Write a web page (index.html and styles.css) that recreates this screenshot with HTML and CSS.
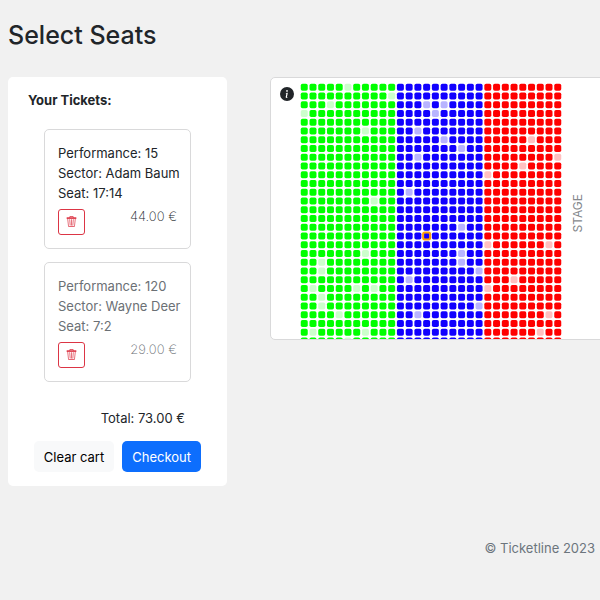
FILE: index.html
```html
<!DOCTYPE html>
<html lang="en">
<head>
<meta charset="utf-8">
<meta name="viewport" content="width=device-width, initial-scale=1">
<title>Select Seats</title>
<link rel="stylesheet" href="styles.css">
</head>
<body>
<svg class="sprite" aria-hidden="true">
  <symbol id="trash" viewBox="0 0 16 16">
    <path d="M6.5 1h3a.5.5 0 0 1 .5.5v1H6v-1a.5.5 0 0 1 .5-.5M11 2.5v-1A1.5 1.5 0 0 0 9.5 0h-3A1.5 1.5 0 0 0 5 1.500v1H1.500a.5.5 0 0 0 0 1h.538l.853 10.660A2 2 0 0 0 4.885 16h6.230a2 2 0 0 0 1.994-1.840l.853-10.660h.538a.5.5 0 0 0 0-1zm1.958 1-.846 10.580a1 1 0 0 1-.997.920h-6.230a1 1 0 0 1-.997-.920L3.042 3.500zm-7.487 1a.5.5 0 0 1 .528.470l.5 8.500a.5.5 0 0 1-.998.060L5 5.030a.5.5 0 0 1 .471-.530m5.058 0a.5.5 0 0 1 .470.530l-.5 8.500a.5.5 0 1 1-.998-.060l.5-8.500a.5.5 0 0 1 .528-.470M8 4.500a.5.5 0 0 1 .5.5v8.500a.5.5 0 0 1-1 0V5a.5.5 0 0 1 .5-.5"/>
    <path d="M1 2h14v2H1z"/>
  </symbol>
</svg>
<main class="page">
  <h1>Select Seats</h1>
  <div class="layout">
    <section class="cart">
      <h2>Your Tickets:</h2>
      <ul class="tickets">
        <li class="ticket">
          <p>Performance: 15</p>
          <p>Sector: Adam Baum</p>
          <p>Seat: 17:14</p>
          <div class="ticket-foot">
            <button class="remove" type="button" aria-label="Remove ticket"><svg><use href="#trash"/></svg></button>
            <span class="price">44.00 €</span>
          </div>
        </li>
        <li class="ticket reserved">
          <p>Performance: 120</p>
          <p>Sector: Wayne Deer</p>
          <p>Seat: 7:2</p>
          <div class="ticket-foot">
            <button class="remove" type="button" aria-label="Remove ticket"><svg><use href="#trash"/></svg></button>
            <span class="price">29.00 €</span>
          </div>
        </li>
      </ul>
      <p class="total">Total: 73.00 €</p>
      <div class="actions">
        <button class="btn light" type="button">Clear cart</button>
        <button class="btn primary" type="button">Checkout</button>
      </div>
    </section>
    <section class="hall">
      <button class="info" type="button" aria-label="Legend">
        <svg viewBox="0 0 16 16"><path d="M8 16A8 8 0 1 0 8 0a8 8 0 0 0 0 16m.93-9.412-1 4.705c-.07.34.029.533.304.533.194 0 .487-.07.686-.246l-.088.416c-.287.346-.92.598-1.465.598-.703 0-1.002-.422-.808-1.319l.738-3.468c.064-.293.006-.399-.287-.470l-.451-.081.082-.381 2.290-.287zM8 5.500a1 1 0 1 1 0-2 1 1 0 0 1 0 2"/></svg>
      </button>
      <svg class="seats" id="seats" viewBox="0 0 900 882" preserveAspectRatio="xMidYMin slice"></svg>
      <span class="stage">STAGE</span>
    </section>
  </div>
  <footer>© Ticketline 2023</footer>
</main>
<script src="seats.js"></script>
</body>
</html>
```
FILE: styles.css
```css
* { box-sizing: border-box; }
body {
  margin: 0;
  background: #f1f1f1;
  color: #212529;
  font: 13px/20px Inter, "Liberation Sans", sans-serif;
  overflow-x: hidden;
}
h1, h2, p, ul { margin: 0; padding: 0; }
button { font: inherit; cursor: pointer; }
.sprite { display: none; }
.page { padding: 20px 5px 0 8px; }
h1 { font-size: 25px; line-height: 30px; font-weight: 500; }
.layout {
  display: grid;
  grid-template-columns: 219px minmax(340px, 1fr);
  gap: 43px;
  align-items: start;
  margin-top: 27px;
}
.cart {
  background: #fff;
  border-radius: 5px;
  padding: 13px 20px 14px;
}
h2 { font-size: 13px; line-height: 20px; font-weight: 700; }
.tickets {
  list-style: none;
  display: grid;
  grid-template-columns: minmax(0, 1fr);
  gap: 13px;
  margin: 19px 16px 0;
}
.ticket {
  border: 1px solid #d9d9da;
  border-radius: 5px;
  padding: 13px;
  white-space: nowrap;
}
.reserved { color: #6b7075; }
.ticket-foot {
  display: flex;
  justify-content: space-between;
  align-items: flex-start;
  margin-top: 6px;
}
.remove {
  display: grid;
  place-items: center;
  width: 27px;
  height: 26px;
  padding: 0 0 2px;
  border: 1px solid #dc3545;
  border-radius: 3px;
  background: #fff;
  color: #dc3545;
}
.remove svg { width: 11px; height: 11px; fill: currentColor; }
.price { font-weight: 200; line-height: 14px; }
.total { margin: 26px 22px 0 0; text-align: right; }
.actions {
  display: flex;
  justify-content: flex-end;
  gap: 8px;
  margin: 13px 6px 0 0;
}
.btn {
  height: 31px;
  padding: 0 10px;
  border: 0;
  border-radius: 5px;
  white-space: nowrap;
}
.light { background: #f8f9fa; color: #000; }
.primary { background: #0d6efd; color: #fff; }
.hall {
  display: flex;
  height: 263px;
  padding: 5px 9px 0;
  border: 1px solid #d9d9da;
  border-radius: 5px;
  background: #fff;
  overflow: hidden;
}
.info {
  flex: none;
  width: 14px;
  height: 14px;
  margin: 4px 6px 0 0;
  padding: 0;
  border: 0;
  background: none;
}
.info svg { display: block; width: 14px; height: 14px; fill: #212529; }
.seats { flex: none; width: 262px; height: 257px; }
.green { fill: #0f0; }
.blue { fill: #10f; }
.red { fill: #f00; }
.green.taken { fill: #cfc; }
.blue.taken { fill: #b8b4ff; }
.red.taken { fill: #ffc0c0; }
.chosen { stroke: #ff9d0a; stroke-width: 7; }
.stage {
  align-self: center;
  margin: 5px 0 0 6px;
  color: #85898d;
  font-size: 12px;
  line-height: 20px;
  writing-mode: vertical-rl;
  transform: rotate(180deg);
}
footer { margin-top: 52px; text-align: right; color: #6c757d; }
```
FILE: seats.js
```js
const sectors = [
  { name: "green", start: 0, cols: 11, taken: ["5:0", "10:1", "3:2", "0:3", "7:5", "8:13", "7:19", "2:20", "2:21", "1:23", "6:23", "8:23", "2:24", "2:25", "4:26", "1:28", "7:28", "5:29"] },
  { name: "blue", start: 11, cols: 10, chosen: "3:17", taken: ["3:2", "5:2", "4:3", "2:5", "5:6", "7:7", "2:8", "1:12", "7:16", "7:19", "7:20", "9:21", "1:22", "9:25", "2:26"] },
  { name: "red", start: 21, cols: 9, taken: ["5:6", "8:8", "4:9", "0:10", "0:18", "7:18", "3:22", "0:23", "7:26", "6:28"] }
];
const cell = 30;
const rows = 30;
const map = document.getElementById("seats");

function drawSeat(sector, col, row) {
  const seat = document.createElementNS("http://www.w3.org/2000/svg", "rect");
  const key = col + ":" + row;
  seat.setAttribute("x", (sector.start + col) * cell + 3);
  seat.setAttribute("y", row * cell + 3);
  seat.setAttribute("width", 24);
  seat.setAttribute("height", 24);
  seat.setAttribute("rx", 6);
  seat.classList.add(sector.name);
  if (sector.taken.includes(key)) seat.classList.add("taken");
  if (sector.chosen === key) seat.classList.add("chosen");
  map.appendChild(seat);
}

for (const sector of sectors)
  for (let row = 0; row < rows; row++)
    for (let col = 0; col < sector.cols; col++)
      drawSeat(sector, col, row);

// Chosen seats go last so their outline lies over the neighbours.
map.querySelectorAll(".chosen").forEach((seat) => map.appendChild(seat));
```
